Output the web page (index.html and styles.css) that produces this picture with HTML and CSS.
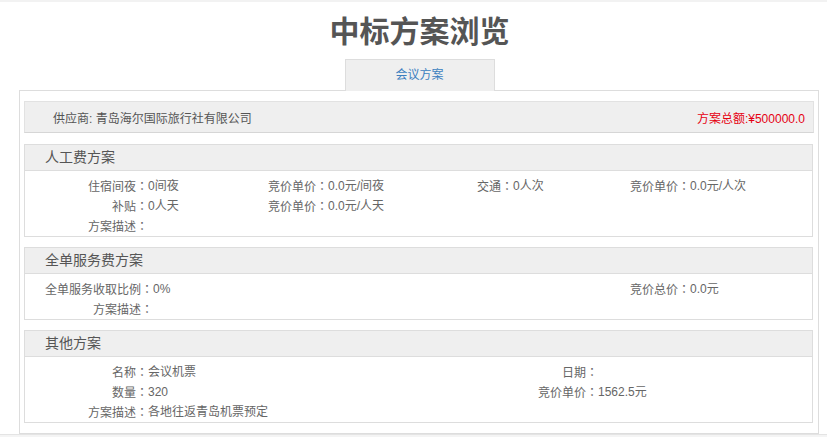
FILE: index.html
```html
<!DOCTYPE html>
<html lang="zh-CN">
<head>
    <meta charset="UTF-8">
    <meta name="viewport" content="width=device-width, initial-scale=1.0">
    <title>中标方案浏览</title>
    <link rel="stylesheet" href="styles.css">
</head>
<body>
    <div class="page">
        <h1 class="title">中标方案浏览</h1>
        <div class="tabs">
            <div class="tab_item">会议方案</div>
        </div>
        <div class="box">
            <div class="supplier">
                <span>供应商: 青岛海尔国际旅行社有限公司</span>
                <span class="total">方案总额:¥500000.0</span>
            </div>

            <!-- 人工费 -->
            <div class="plan">
                <div class="plan_head">人工费方案</div>
                <div class="plan_body grid_labor">
                    <span class="lab">住宿间夜<b lang="zh-TW">：</b></span><span>0间夜</span>
                    <span class="lab">竞价单价<b lang="zh-TW">：</b></span><span>0.0元/间夜</span>
                    <span class="lab">交通<b lang="zh-TW">：</b></span><span>0人次</span>
                    <span class="lab">竞价单价<b lang="zh-TW">：</b></span><span>0.0元/人次</span>

                    <span class="lab">补贴<b lang="zh-TW">：</b></span><span>0人天</span>
                    <span class="lab">竞价单价<b lang="zh-TW">：</b></span><span>0.0元/人天</span>
                    <span></span><span></span><span></span><span></span>

                    <span class="lab">方案描述<b lang="zh-TW">：</b></span><span></span>
                </div>
            </div>

            <!-- 全单服务费 -->
            <div class="plan">
                <div class="plan_head">全单服务费方案</div>
                <div class="plan_body grid_service">
                    <span class="lab">全单服务收取比例<b lang="zh-TW">：</b></span><span>0%</span>
                    <span class="lab">竞价总价<b lang="zh-TW">：</b></span><span>0.0元</span>

                    <span class="lab">方案描述<b lang="zh-TW">：</b></span><span></span>
                </div>
            </div>

            <!-- 其他 -->
            <div class="plan">
                <div class="plan_head">其他方案</div>
                <div class="plan_body grid_other">
                    <span class="lab">名称<b lang="zh-TW">：</b></span><span>会议机票</span>
                    <span class="lab">日期<b lang="zh-TW">：</b></span><span></span>

                    <span class="lab">数量<b lang="zh-TW">：</b></span><span>320</span>
                    <span class="lab">竞价单价<b lang="zh-TW">：</b></span><span>1562.5元</span>

                    <span class="lab">方案描述<b lang="zh-TW">：</b></span><span>各地往返青岛机票预定</span>
                </div>
            </div>
        </div>
        <div class="bottom"></div>
    </div>
</body>
</html>
```

FILE: styles.css
```css
*{
    box-sizing: border-box;
}
body{
    margin: 0;
    padding: 0;
    background-color: #fff;
    font-family: "Liberation Sans", "Noto Sans CJK SC", sans-serif;
    font-size: 12px;
    color: #666;
}
.page{
    width: 827px;
    border-top: 2px solid #f2f2f2;
}
    .title{
        margin: 0;
        padding-top: 10px;
        height: 57px;
        line-height: 40px;
        text-align: center;
        font-size: 30px;
        font-weight: bold;
        color: #555;
        padding-left: 12px;
    }
    .tabs{
        display: flex;
        justify-content: center;
        padding-left: 12px;
    }
        .tab_item{
            width: 150px;
            height: 32px;
            margin-bottom: -1px;
            background-color: #efefef;
            border: 1px solid #ddd;
            border-bottom: none;
            text-align: center;
            line-height: 30px;
            color: #3c7fbf;
            position: relative;
        }
    .box{
        width: 800px;
        margin-left: 19px;
        border: 1px solid #ddd;
        padding: 10px 4px 10px 4px;
    }
        .supplier{
            height: 32px;
            background-color: #efefef;
            border: 1px solid #e2e2e2;
            border-bottom-color: #d6d6d6;
            display: flex;
            justify-content: space-between;
            align-items: center;
            padding: 0 8px 0 28px;
            color: #555;
        }
            .total{
                color: #e60012;
            }
        .plan{
            margin-top: 10px;
            margin-right: 1px;
            border: 1px solid #ddd;
        }
        .supplier + .plan{
            margin-top: 11px;
        }
            .plan_head{
                height: 26px;
                line-height: 25px;
                background-color: #efefef;
                border-bottom: 1px solid #ddd;
                padding-left: 20px;
                font-size: 14px;
                color: #555;
            }
            .plan_body{
                display: grid;
                grid-auto-rows: 20px;
                line-height: 20px;
                padding: 5px 0 0 0;
                white-space: nowrap;
            }
                .lab{
                    text-align: right;
                }
                    .lab b{
                        font-weight: normal;
                        font-family: "Noto Sans CJK TC", sans-serif;
                    }
            .grid_labor{
                grid-template-columns: 123px 120px 60px 149px 36px 117px 60px 1fr;
            }
            .grid_service{
                grid-template-columns: 128px 477px 60px 1fr;
            }
            .grid_other{
                grid-template-columns: 123px 390px 60px 1fr;
            }
.bottom{
    height: 6px;
    border-top: 1px solid #e4e4e4;
    background-color: #f4f4f4;
}
```
